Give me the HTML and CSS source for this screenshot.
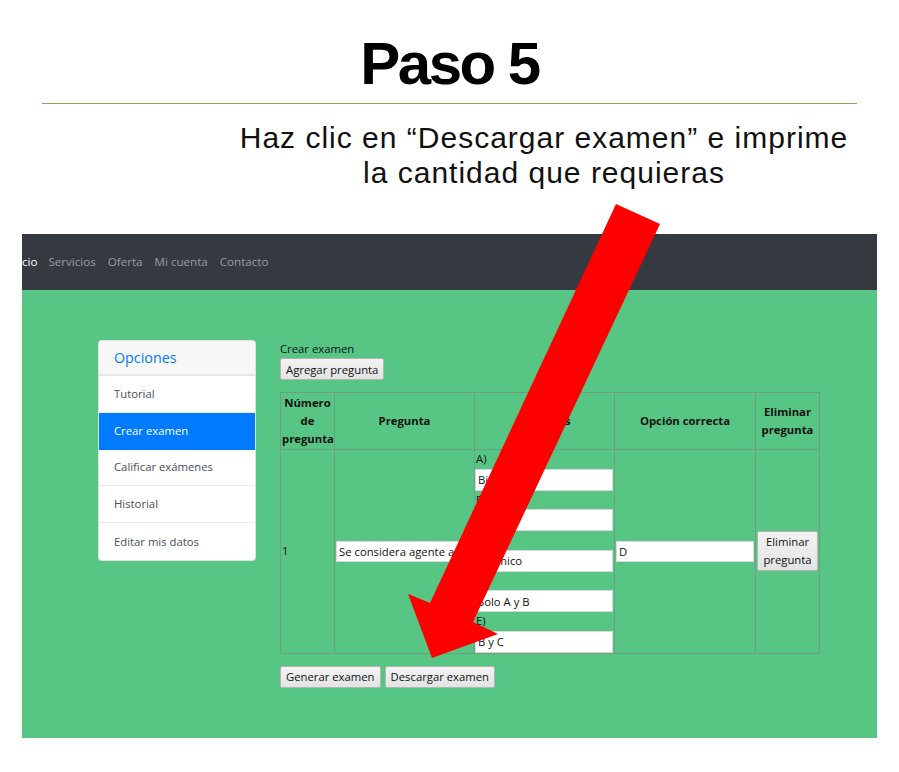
FILE: index.html
```html
<!DOCTYPE html>
<html lang="es">
<head>
<meta charset="utf-8">
<title>Paso 5</title>
<link rel="stylesheet" href="styles.css">
</head>
<body>
<div class="slide">
  <h1 class="title">Paso 5</h1>
  <div class="rule"></div>
  <p class="subtitle">Haz clic en “Descargar examen” e imprime<br>la cantidad que requieras</p>

  <div class="shot">
    <nav class="navbar">
      <a class="nav-link active">cio</a>
      <a class="nav-link">Servicios</a>
      <a class="nav-link">Oferta</a>
      <a class="nav-link">Mi cuenta</a>
      <a class="nav-link">Contacto</a>
    </nav>
    <div class="content">
      <aside class="card">
        <div class="card-header">Opciones</div>
        <a class="list-item">Tutorial</a>
        <a class="list-item active">Crear examen</a>
        <a class="list-item">Calificar exámenes</a>
        <a class="list-item">Historial</a>
        <a class="list-item">Editar mis datos</a>
      </aside>
      <section class="main">
        <div class="label">Crear examen</div>
        <button class="btn">Agregar pregunta</button>
        <table class="exam">
          <colgroup>
            <col class="c1"><col class="c2"><col class="c3"><col class="c4"><col class="c5">
          </colgroup>
          <thead>
            <tr>
              <th>Número de pregunta</th>
              <th>Pregunta</th>
              <th>Opciones</th>
              <th>Opción correcta</th>
              <th>Eliminar pregunta</th>
            </tr>
          </thead>
          <tbody>
            <tr>
              <td class="num">1</td>
              <td><input class="field wide" value="Se considera agente a..."></td>
              <td class="opts">
                <div class="opt-label">A)</div>
                <input class="field opt" value="Biológico">
                <div class="opt-label">B)</div>
                <input class="field opt" value="Físico">
                <div class="opt-label">C)</div>
                <input class="field opt" value="Químico">
                <div class="opt-label">D)</div>
                <input class="field opt" value="Solo A y B">
                <div class="opt-label">E)</div>
                <input class="field opt" value="B y C">
              </td>
              <td><input class="field correct" value="D"></td>
              <td class="del"><button class="btn btn-del">Eliminar pregunta</button></td>
            </tr>
          </tbody>
        </table>
        <div class="actions">
          <button class="btn">Generar examen</button>
          <button class="btn">Descargar examen</button>
        </div>
      </section>
    </div>
  </div>

  <svg class="arrow" width="899" height="772" viewBox="0 0 899 772" aria-hidden="true">
    <polygon points="616,204 660,224 473,622 498,634 432,658 408,594 430,603" fill="#ff0000"/>
  </svg>
</div>
</body>
</html>
```

FILE: styles.css
```css
* { box-sizing: border-box; }

html, body {
  margin: 0;
  padding: 0;
  background: #ffffff;
}

.slide {
  position: relative;
  width: 899px;
  height: 772px;
  overflow: hidden;
  padding-top: 34px;
  font-family: "Open Sans", "Noto Sans", sans-serif;
}

.title {
  margin: 0;
  font-family: "Liberation Sans", Arial, sans-serif;
  font-weight: bold;
  font-size: 60px;
  line-height: 60px;
  letter-spacing: -2.5px;
  text-align: center;
  color: #000;
}

.rule {
  margin: 9px 0 0 42px;
  width: 815px;
  height: 1px;
  background: #7fae5c;
}

.subtitle {
  margin: 16px 0 0 204px;
  width: 680px;
  font-family: "Liberation Sans", Arial, sans-serif;
  font-size: 30px;
  line-height: 35px;
  letter-spacing: 1px;
  text-align: center;
  color: #111;
}

.shot {
  margin: 44px 0 0 22px;
  width: 855px;
  height: 504px;
  display: flex;
  flex-direction: column;
}

.navbar {
  height: 56px;
  background: #343a40;
  display: flex;
  align-items: center;
  padding-bottom: 2px;
  font-size: 11.6px;
}

.nav-link {
  color: #9a9da0;
  padding: 0 6px;
}

.nav-link.active {
  color: #ffffff;
  padding-left: 0;
  padding-right: 5px;
}

.content {
  flex: 1;
  background: #57c684;
  display: flex;
  align-items: flex-start;
  gap: 24px;
  padding: 50px 0 0 76px;
}

.card {
  width: 158px;
  background: #fff;
  border: 1px solid rgba(0,0,0,0.12);
  border-radius: 4px;
  display: flex;
  flex-direction: column;
  overflow: hidden;
}

.card-header {
  height: 35px;
  padding: 0 15px 1px;
  display: flex;
  align-items: center;
  background: #f7f7f7;
  border-bottom: 2px solid #e6e6e6;
  color: #007bff;
  font-size: 14.3px;
}

.list-item {
  height: 36.8px;
  padding: 0 15px 1px;
  display: flex;
  align-items: center;
  color: #495057;
  font-size: 11.3px;
  border-bottom: 1px solid #ececec;
}

.list-item:last-child { border-bottom: 0; }

.list-item.active {
  background: #007bff;
  color: #fff;
  border-bottom-color: #007bff;
}

.main {
  display: flex;
  flex-direction: column;
  align-items: flex-start;
  font-size: 11.3px;
  color: #111;
}

.label {
  line-height: 18px;
}

.btn {
  font-family: "Open Sans", "Noto Sans", sans-serif;
  font-size: 11.3px;
  color: #111;
  height: 22px;
  padding: 0 5px;
  background: linear-gradient(#f3f3f3, #e3e3e3);
  border: 1px solid #b4b4b4;
  border-radius: 2px;
}

.exam {
  margin-top: 12px;
  width: 539px;
  border-collapse: collapse;
  border: 1px solid #4d7d5e;
  table-layout: fixed;
}

.c1 { width: 54px; }
.c2 { width: 140px; }
.c3 { width: 140px; }
.c4 { width: 141px; }
.c5 { width: 64px; }

.exam th,
.exam td {
  border: 1px solid #6f9f7f;
  padding: 1px;
}

.exam th {
  height: 56px;
  font-weight: bold;
  line-height: 18px;
  text-align: center;
}

.exam td {
  vertical-align: middle;
  line-height: 18px;
}

.exam td.opts {
  padding: 0;
}

.opt-label {
  line-height: 18.6px;
  height: 18.6px;
  padding-left: 1px;
}

.field {
  display: block;
  font-family: "Open Sans", "Noto Sans", sans-serif;
  font-size: 11.3px;
  color: #111;
  height: 22px;
  padding: 0 2px;
  background: #fff;
  border: 1px solid #d9d9d9;
  outline: none;
}

.field.wide { width: 137px; height: 21px; }
.field.opt { width: 138px; }
.field.correct { width: 138px; height: 21px; }

.del { text-align: center; }

.btn-del {
  height: 40px;
  width: 61px;
  padding: 0 2px;
  line-height: 18px;
}

.actions {
  margin-top: 12px;
  display: flex;
  gap: 4px;
}

.arrow {
  position: absolute;
  top: 0;
  left: 0;
  pointer-events: none;
}
```
